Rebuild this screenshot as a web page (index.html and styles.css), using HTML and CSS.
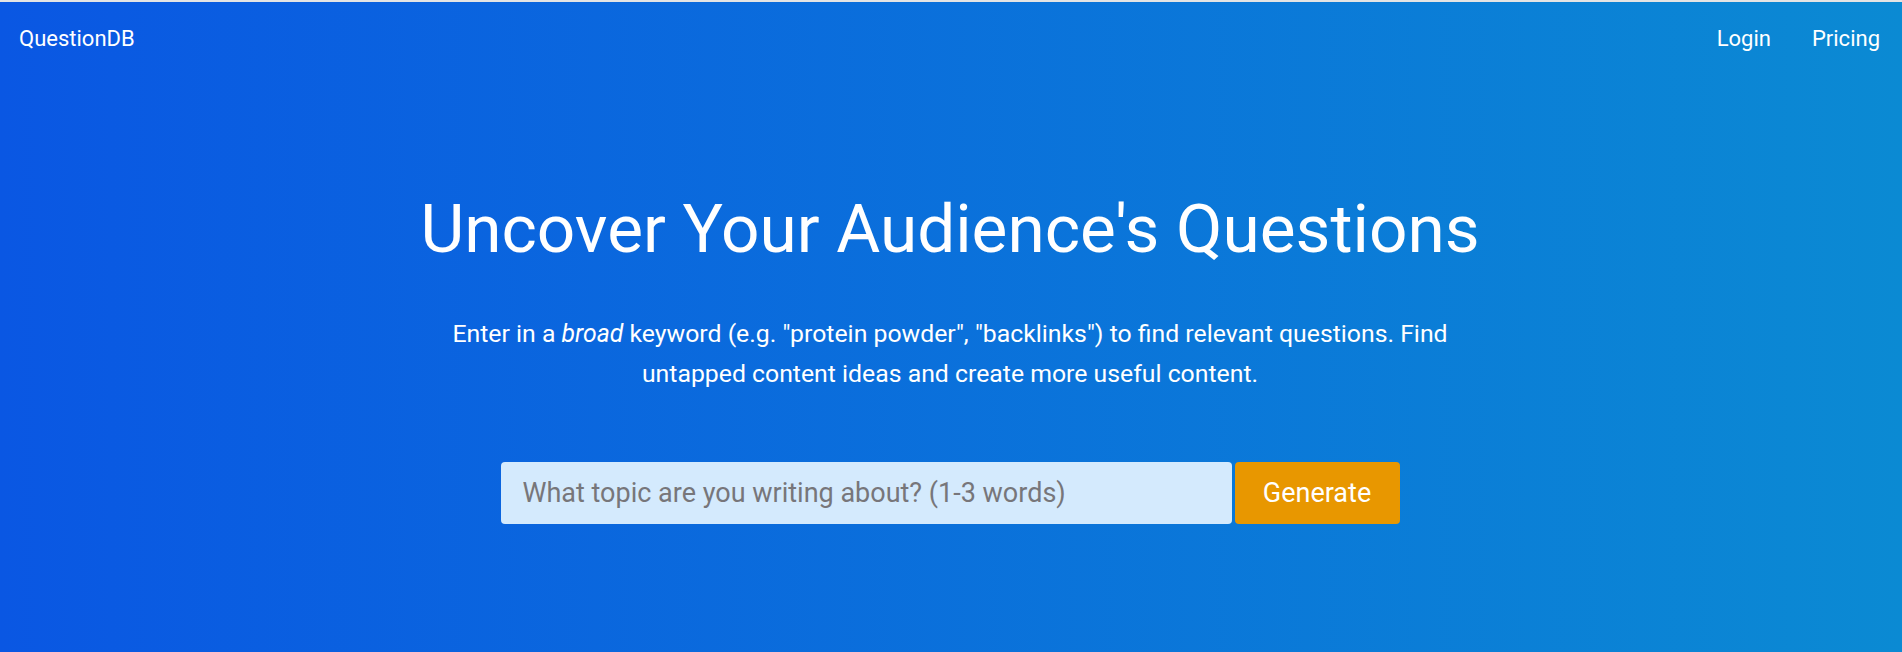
FILE: index.html
```html
<!DOCTYPE html>
<html lang="en">
<head>
    <meta charset="UTF-8">
    <meta name="viewport" content="width=device-width, initial-scale=1.0">
    <title>QuestionDB</title>
    <link rel="stylesheet" href="styles.css">
</head>
<body>
    <div class="page">
        <nav class="navbar">
            <a class="brand" href="#">QuestionDB</a>
            <div class="nav-links">
                <a href="#">Login</a>
                <a href="#">Pricing</a>
            </div>
        </nav>

        <section class="hero">
            <h1>Uncover Your Audience's Questions</h1>
            <p class="lead">Enter in a <em>broad</em> keyword (e.g. "protein powder", "backlinks") to find relevant questions. Find untapped content ideas and create more useful content.</p>

            <form class="search" action="#" method="get">
                <input type="text" name="q" placeholder="What topic are you writing about? (1-3 words)">
                <button type="submit">Generate</button>
            </form>
        </section>
    </div>
</body>
</html>
```

FILE: styles.css
```css
html, body {
    margin: 0;
    padding: 0;
    height: 100%;
}

body {
    font-family: Roboto, "Liberation Sans", Arial, sans-serif;
    border-top: 2px solid #e4e4e4;
    box-sizing: border-box;
    background: linear-gradient(to right, #0a57e3, #0b8ad3);
    color: #fff;
}

.page {
    min-height: 100%;
    padding-right: 2px;
}

.navbar {
    display: flex;
    justify-content: space-between;
    align-items: center;
    padding: 18px 20px 0 19px;
    height: 36px;
}

.navbar a {
    color: #fff;
    text-decoration: none;
    font-size: 22px;
}

.nav-links {
    display: flex;
    gap: 41px;
}

.hero {
    text-align: center;
    padding-top: 132px;
}

h1 {
    font-size: 67.5px;
    font-weight: 400;
    margin: 0;
    line-height: 1.2;
}

.lead {
    font-size: 24.8px;
    line-height: 40px;
    max-width: 1060px;
    margin: 45px auto 0;
}

.search {
    display: flex;
    justify-content: center;
    gap: 3px;
    margin-top: 68px;
}

.search input {
    width: 731px;
    height: 62px;
    box-sizing: border-box;
    border: none;
    border-radius: 4px;
    background-color: #d4eafd;
    padding: 0 22px;
    font-family: inherit;
    font-size: 27px;
    color: #333;
}

.search input::placeholder {
    color: #77767a;
}

.search button {
    width: 165px;
    height: 62px;
    border: none;
    border-radius: 4px;
    background-color: #e89700;
    color: #fff;
    font-family: inherit;
    font-size: 27px;
    cursor: pointer;
}
```
